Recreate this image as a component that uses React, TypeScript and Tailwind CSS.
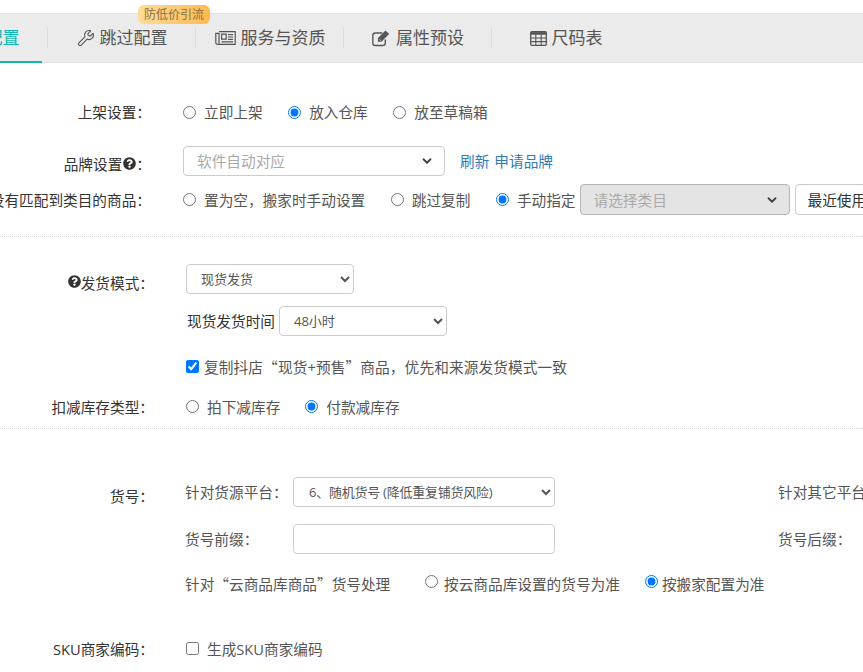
import type { ReactNode } from 'react';
import { ChevronDown, Settings, Wrench } from 'lucide-react';
import { FaQuestionCircle } from 'react-icons/fa';

function PaperIcon() {
	return (
		<svg width="21" height="16" viewBox="0 0 21 16" fill="none" stroke="#555" strokeWidth="1.2">
			<path d="M4 1.6h16.2v12.8H2.6a1.8 1.8 0 0 1-1.8-1.8V3.4h3.2v10" />
			<path d="M6.6 4.2h4.6v5h-4.6z" />
			<path d="M13 4.6h5M13 7h5M13 9.4h5M6.6 11.8h11.4" />
		</svg>
	);
}

function EditIcon() {
	return (
		<svg width="19" height="18" viewBox="0 0 18 17" fill="none">
			<path d="M12.6 10v3.2a2.4 2.4 0 0 1-2.4 2.4H3.2a2.4 2.4 0 0 1-2.4-2.4V6.2a2.4 2.4 0 0 1 2.4-2.4h6.6" stroke="#555" strokeWidth="1.3" />
			<path d="M5.6 8.6 12.8 1.4l3.4 3.4-7.2 7.2H5.6z" fill="#555" />
			<path d="M7 9.6l1.4 1.4" stroke="#ebebeb" strokeWidth="0.8" />
		</svg>
	);
}

function TableIcon() {
	return (
		<svg width="17" height="15" viewBox="0 0 17 15" fill="none" stroke="#555">
			<rect x="0.7" y="0.7" width="15.6" height="13.6" rx="1" strokeWidth="1.3" />
			<path d="M0.7 2.4h15.6" strokeWidth="2.6" />
			<path d="M0.7 7h15.6M0.7 10.6h15.6M5.8 3v11M11.2 3v11" strokeWidth="1.1" />
		</svg>
	);
}

const tabs = [
	{ label: '基础配置', active: true, icon: <Settings size={18} /> },
	{ label: '跳过配置', icon: <Wrench size={18} strokeWidth={1.5} /> },
	{ label: '服务与资质', icon: <PaperIcon /> },
	{ label: '属性预设', icon: <EditIcon /> },
	{ label: '尺码表', icon: <TableIcon /> },
];

function Row({
	label,
	className,
	labelWidth = 'w-[151px]',
	children,
}: {
	label?: ReactNode;
	className: string;
	labelWidth?: string;
	children: ReactNode;
}) {
	return (
		<div className={`flex items-center whitespace-nowrap ${className}`}>
			<div className={`flex shrink-0 justify-end text-[14.67px] text-[#333] ${labelWidth}`}>{label}</div>
			{children}
		</div>
	);
}

function Radio({
	name,
	label,
	checked,
	className,
	gap = 'ml-[8px]',
	inputClass,
}: {
	name: string;
	label: string;
	checked?: boolean;
	className?: string;
	gap?: string;
	inputClass?: string;
}) {
	return (
		<label className={`flex items-center text-[14.67px] text-[#555] ${className ?? ''}`}>
			<input type="radio" name={name} defaultChecked={checked} className={inputClass} />
			<span className={gap}>{label}</span>
		</label>
	);
}

function Quote({ children }: { children: string }) {
	return <span className="font-['Noto_Sans_CJK_SC',sans-serif]">{children}</span>;
}

function ArrowSelect({ text, className }: { text: string; className: string }) {
	return (
		<div className={`relative flex items-center rounded-[4px] border ${className}`}>
			{text}
			<ChevronDown size={14} strokeWidth={3.2} className="absolute right-[10px] text-[#444]" />
		</div>
	);
}

function Divider({ className }: { className: string }) {
	return <div className={`border-t border-dotted border-[#d8d8d8] ${className}`} />;
}

export default function App() {
	return (
		<div className="h-screen w-full overflow-hidden bg-white font-['Open_Sans','Noto_Sans_CJK_SC',sans-serif]">
			<div className="mt-[13px] flex h-[50px] items-stretch border-y border-[#e3e3e3] bg-[#ebebeb]">
				<div className="-ml-[100px] flex">
					{tabs.map((t, i) => (
						<div
							key={t.label}
							className={`relative flex w-[148px] items-center justify-center text-[17px] ${t.active ? 'text-[#12b5b0]' : 'text-[#555]'}`}
						>
							{t.active && <div className="absolute right-[6px] bottom-[-1px] left-0 h-[2px] bg-[#12b5b0]" />}
							{i < tabs.length - 1 && <div className="absolute top-[13px] right-0 h-[21px] w-px bg-[#dcdcdc]" />}
							<span className="mr-[5px] flex">{t.icon}</span>
							{t.label}
							{i === 1 && (
								<span className="absolute top-[-9px] left-[90px] rounded-[6px] bg-gradient-to-r from-[#ffdc98] to-[#ffb84d] px-[6px] text-[12px] leading-[19px] whitespace-nowrap text-[#85703f]">
									防低价引流
								</span>
							)}
						</div>
					))}
				</div>
			</div>

			<Row label="上架设置：" className="mt-[34px] h-[30px]">
				<div className="ml-[32px] flex">
					<Radio name="shelf" label="立即上架" />
					<Radio name="shelf" label="放入仓库" checked className="ml-[25.5px]" />
					<Radio name="shelf" label="放至草稿箱" className="ml-[25.5px]" />
				</div>
			</Row>

			<Row
				label={
					<>
						<span className="mt-[6px]">品牌设置</span>
						<FaQuestionCircle size={13} className="mt-[10px] ml-px text-[#333]" />
						<span className="mt-[6px]">：</span>
					</>
				}
				className="mt-[19px] h-[30px]"
			>
				<ArrowSelect
					text="软件自动对应"
					className="ml-[32px] h-[30px] w-[262px] border-[#ccc] bg-white pl-[13px] text-[14.67px] text-[#aaa]"
				/>
				<a className="ml-[15px] text-[14.67px] text-[#337ab7]">刷新</a>
				<a className="ml-[5px] text-[14.67px] text-[#337ab7]">申请品牌</a>
			</Row>

			<Row label="没有匹配到类目的商品：" className="mt-[8px] h-[31px]">
				<div className="ml-[32px] flex items-center">
					<Radio name="match" label="置为空，搬家时手动设置" />
					<Radio name="match" label="跳过复制" className="ml-[25.5px]" />
					<Radio name="match" label="手动指定" checked className="ml-[25.5px]" />
					<ArrowSelect
						text="请选择类目"
						className="ml-[4px] h-[31px] w-[210px] shrink-0 border-[#b4b4b4] bg-[#e4e4e4] pl-[13px] text-[14.67px] text-[#aaa]"
					/>
					<button className="ml-[5px] h-[31px] w-[100px] shrink-0 rounded-[4px] border border-[#ccc] pl-[12px] text-left text-[14.67px] text-[#333]">
						最近使用
					</button>
				</div>
			</Row>

			<Divider className="mt-[21px]" />

			<Row
				labelWidth="w-[154px]"
				label={
					<>
						<FaQuestionCircle size={13} className="mt-[11px] text-[#333]" />
						<span className="mt-[8px]">发货模式：</span>
					</>
				}
				className="mt-[27px] h-[30px]"
			>
				<select className="ml-[32px] h-[30px] w-[168px] rounded-[4px] border border-[#ccc] bg-white pl-[10px] text-[13px] text-[#555]">
					<option>现货发货</option>
				</select>
			</Row>

			<Row className="mt-[12px] h-[30px]">
				<span className="ml-[36px] w-[92px] shrink-0 text-[14.67px] text-[#333]">现货发货时间</span>
				<select className="h-[30px] w-[168px] rounded-[4px] border border-[#ccc] bg-white pl-[10px] text-[13px] text-[#555]">
					<option>48小时</option>
				</select>
			</Row>

			<Row className="mt-[20px] h-[21px]">
				<label className="ml-[35px] flex items-center text-[14.67px] text-[#555]">
					<input type="checkbox" defaultChecked />
					<span className="ml-[5px] tracking-[0.12px]">
						复制抖店<Quote>“</Quote>现货+预售<Quote>”</Quote>商品，优先和来源发货模式一致
					</span>
				</label>
			</Row>

			<Row labelWidth="w-[154px]" label="扣减库存类型：" className="mt-[19px] h-[21px]">
				<div className="ml-[32px] flex">
					<Radio name="stock" label="拍下减库存" />
					<Radio name="stock" label="付款减库存" checked className="ml-[25px]" />
				</div>
			</Row>

			<Divider className="mt-[11px]" />

			<Row labelWidth="w-[154px]" label={<span className="mt-[7px]">货号：</span>} className="mt-[48px] h-[30px]">
				<span className="ml-[31px] w-[108px] shrink-0 text-[14.67px] text-[#555]">针对货源平台：</span>
				<select className="h-[30px] w-[262px] shrink-0 rounded-[4px] border border-[#ccc] bg-white pl-[11px] text-[13px] tracking-[-0.25px] text-[#555]">
					<option>6、随机货号 (降低重复铺货风险)</option>
				</select>
				<span className="ml-[223px] shrink-0 text-[14.67px] text-[#555]">针对其它平台：</span>
			</Row>

			<Row className="mt-[17px] h-[30px]">
				<span className="ml-[34px] w-[108px] shrink-0 text-[14.67px] text-[#555]">货号前缀：</span>
				<input className="h-[30px] w-[262px] shrink-0 rounded-[4px] border border-[#ccc] bg-white" />
				<span className="ml-[223px] shrink-0 text-[14.67px] text-[#555]">货号后缀：</span>
			</Row>

			<Row className="mt-[19px] h-[21px]">
				<span className="ml-[34px] w-[240px] shrink-0 text-[14.67px] text-[#555]">
					针对<Quote>“</Quote>云商品库商品<Quote>”</Quote>货号处理
				</span>
				<Radio name="cloud" label="按云商品库设置的货号为准" gap="ml-[6px]" inputClass="-mt-[4px]" />
				<Radio name="cloud" label="按搬家配置为准" checked gap="ml-[4px]" inputClass="-mt-[4px]" className="ml-[25px]" />
			</Row>

			<Row labelWidth="w-[154px]" label="SKU商家编码：" className="mt-[44px] h-[21px]">
				<label className="ml-[32px] flex items-center text-[14.67px] text-[#555]">
					<input type="checkbox" />
					<span className="ml-[8px]">生成SKU商家编码</span>
				</label>
			</Row>
		</div>
	);
}
